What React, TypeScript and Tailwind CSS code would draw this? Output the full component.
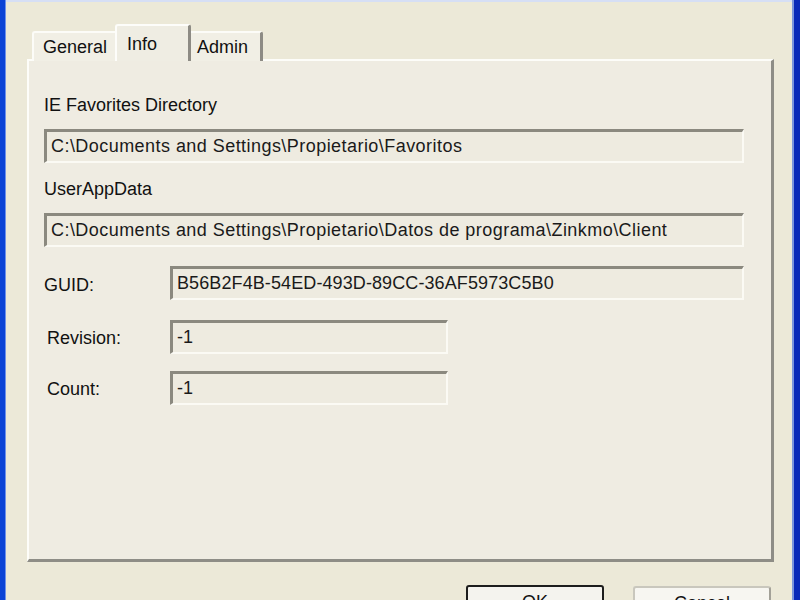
export default function App() {
  const font = { fontFamily: '"Liberation Sans", Arial, sans-serif' };

  const field =
    "h-[34px] shrink-0 flex items-center pl-[4px] border-t-[3px] border-l-[3px] border-b-2 border-r-2 border-t-[#8b897f] border-l-[#8b897f] border-b-[#fbfaf4] border-r-[#fbfaf4] bg-[#eeebe0] text-[18px] text-[#1a1a1a] whitespace-nowrap overflow-hidden";

  return (
    <div
      className="flex w-[800px] h-[600px] overflow-hidden bg-[#ece9d8] text-[#111]"
      style={font}
    >
      {/* window frame left */}
      <div className="w-[6px] shrink-0 bg-[#0b43d6] border-r border-r-[#6e92ea]" />

      <div className="flex-1 flex flex-col border-t-2 border-t-[#d6dff5]">
        {/* Tabs */}
        <div className="flex shrink-0 items-end mt-[22px] ml-[26px] h-[37px] relative z-10">
          <div className="h-[30px] w-[83px] flex items-center pl-[9px] text-[18px] bg-[#f1efe5] border-t-2 border-l-2 border-t-[#fcfcf8] border-l-[#fcfcf8] rounded-tl-[3px]">
            General
          </div>
          <div className="h-[37px] w-[76px] flex items-start pt-[5px] pl-[10px] text-[18px] bg-[#efede3] border-t-2 border-l-2 border-r-[3px] border-t-[#fdfdfa] border-l-[#fdfdfa] border-r-[#8d8b84] rounded-t-[3px]">
            Info
          </div>
          <div className="h-[30px] w-[72px] flex items-center pl-[6px] text-[18px] bg-[#f1efe5] border-t-2 border-r-[3px] border-t-[#fcfcf8] border-r-[#8d8b84] rounded-tr-[3px]">
            Admin
          </div>
        </div>

        {/* Tab panel */}
        <div className="shrink-0 -mt-[2px] ml-[21px] mr-[18px] h-[503px] border-t-2 border-l-2 border-r-[3px] border-b-[3px] border-t-[#fdfdf9] border-l-[#fdfdf9] border-r-[#8e8d86] border-b-[#8e8d86] bg-[#efece2] pt-[34px] pl-[15px] pr-[27px]">
          <div className="text-[18px] leading-[21px]">IE Favorites Directory</div>
          <div className={field + " mt-[13px] tracking-[0.45px]"}>
            C:\Documents and Settings\Propietario\Favoritos
          </div>

          <div className="text-[18px] leading-[21px] mt-[16px]">UserAppData</div>
          <div className={field + " mt-[13px] tracking-[0.45px]"}>
            C:\Documents and Settings\Propietario\Datos de programa\Zinkmo\Client
          </div>

          <div className="flex items-center mt-[19px]">
            <div className="w-[126px] text-[18px] pt-[4px]">GUID:</div>
            <div className={field + " flex-1 tracking-[0.1px]"}>B56B2F4B-54ED-493D-89CC-36AF5973C5B0</div>
          </div>

          <div className="flex items-center mt-[20px]">
            <div className="w-[126px] pl-[3px] text-[18px] pt-[2px]">Revision:</div>
            <div className={field + " w-[278px]"}>-1</div>
          </div>

          <div className="flex items-center mt-[17px]">
            <div className="w-[126px] pl-[3px] text-[18px] pt-[2px]">Count:</div>
            <div className={field + " w-[278px]"}>-1</div>
          </div>
        </div>

        {/* Buttons */}
        <div className="flex shrink-0 justify-end gap-[29px] mt-[23px] mr-[21px]">
          <div className="w-[138px] h-[50px] shrink-0 flex items-start justify-center pt-[5px] text-[18px] leading-[21px] bg-[#f4f3ee] border-2 border-[#1d1d1d] rounded-[3px]">
            OK
          </div>
          <div className="w-[138px] h-[50px] shrink-0 flex items-start justify-center pt-[5px] text-[18px] leading-[21px] bg-[#f7f6f1] border-2 border-[#c9c7bd] border-r-[#a3a198] rounded-[3px] mt-[1px]">
            Cancel
          </div>
        </div>
      </div>

      {/* window frame right */}
      <div className="w-[8px] shrink-0 bg-[#0a2ab8] border-l-2 border-l-[#7c96dc]" />
    </div>
  );
}
